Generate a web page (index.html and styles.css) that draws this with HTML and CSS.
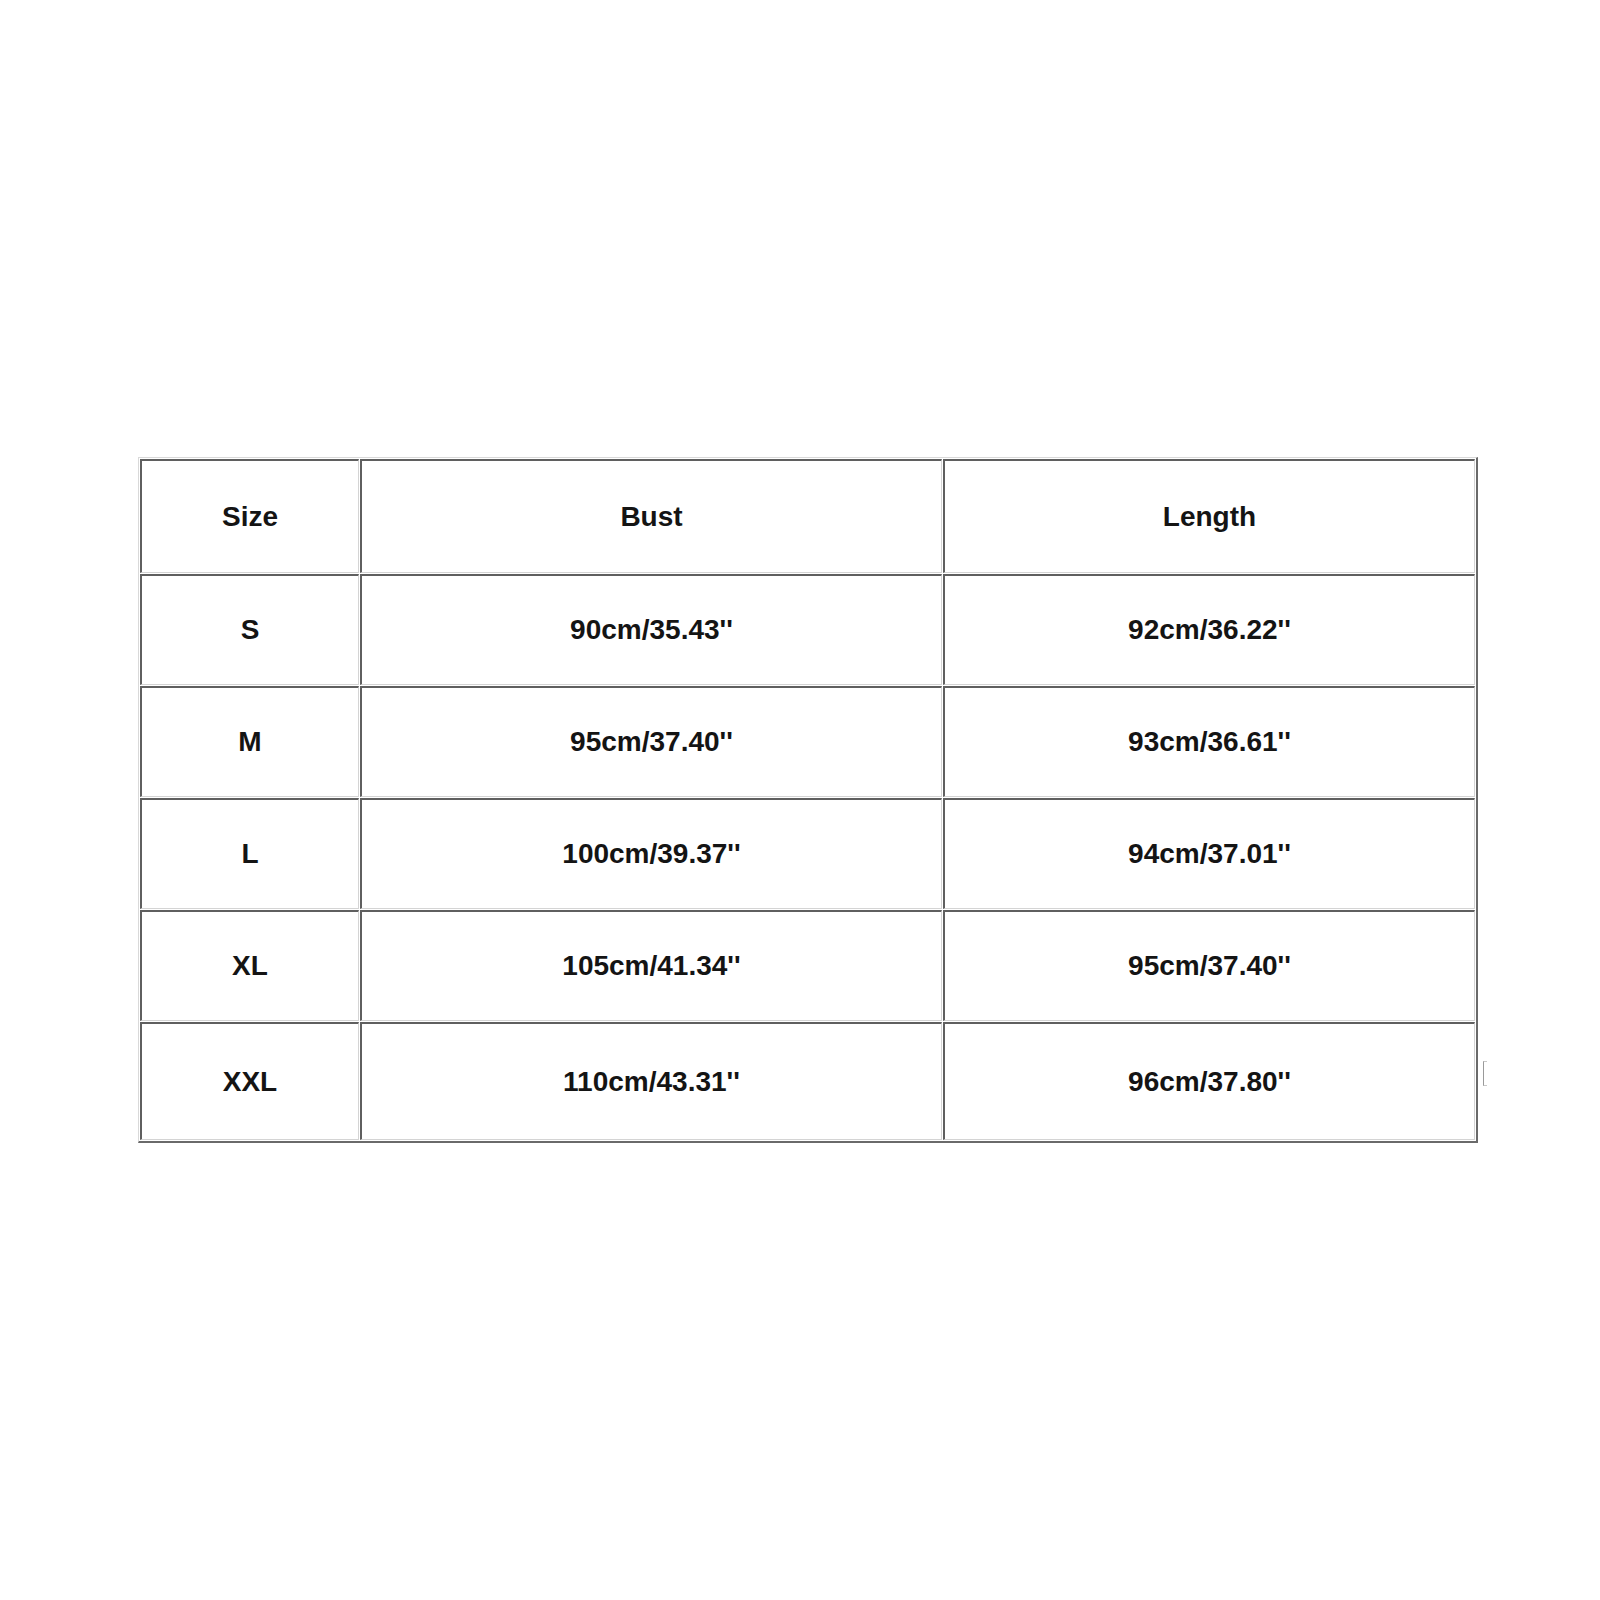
FILE: index.html
```html
<!DOCTYPE html>
<html>
<head>
<meta charset="utf-8">
<link rel="stylesheet" href="styles.css">
</head>
<body>
<div class="page">
  <div class="chart">
    <table class="sizes">
      <thead>
        <tr>
          <th class="c-size">Size</th>
          <th class="c-bust">Bust</th>
          <th class="c-len">Length</th>
        </tr>
      </thead>
      <tbody>
        <tr><td>S</td><td>90cm/35.43''</td><td>92cm/36.22''</td></tr>
        <tr><td>M</td><td>95cm/37.40''</td><td>93cm/36.61''</td></tr>
        <tr><td>L</td><td>100cm/39.37''</td><td>94cm/37.01''</td></tr>
        <tr><td>XL</td><td>105cm/41.34''</td><td>95cm/37.40''</td></tr>
        <tr class="last"><td>XXL</td><td>110cm/43.31''</td><td>96cm/37.80''</td></tr>
      </tbody>
    </table>
    <span class="mark"></span>
  </div>
</div>
</body>
</html>
```

FILE: styles.css
```css
html, body {
  margin: 0;
  padding: 0;
  background: #ffffff;
}

.page {
  width: 1600px;
  height: 1600px;
  padding: 457px 0 0 138px;
  box-sizing: border-box;
}

.chart {
  position: relative;
  width: 1340px;
}

.sizes {
  width: 1340px;
  table-layout: fixed;
  border-collapse: separate;
  border-spacing: 1px;
  border-top: 1px solid #d9d9d9;
  border-left: 1px solid #d9d9d9;
  border-right: 2px solid #6a6a6a;
  border-bottom: 2px solid #6a6a6a;
  font-family: "Liberation Sans", Arial, sans-serif;
  font-weight: bold;
  font-size: 28px;
  color: #141414;
}

.sizes th,
.sizes td {
  box-sizing: border-box;
  padding: 0;
  text-align: center;
  vertical-align: middle;
  border-top: 2px solid #5f5f5f;
  border-left: 2px solid #5f5f5f;
  border-right: 1px solid #d4d4d4;
  border-bottom: 1px solid #d4d4d4;
}

.sizes th {
  height: 114px;
  font-weight: bold;
}

.sizes th span {
  display: inline-block;
}

.sizes td {
  height: 111px;
}

.sizes .last td {
  height: 118px;
}

.c-size { width: 219px; }
.c-bust { width: 582px; }
.c-len { width: 532px; }

.mark {
  position: absolute;
  left: 1345px;
  top: 604px;
  width: 3px;
  height: 23px;
  border-left: 1px solid #9a9a9a;
  border-top: 1px solid #c8c8c8;
  border-bottom: 1px solid #c8c8c8;
}
```
